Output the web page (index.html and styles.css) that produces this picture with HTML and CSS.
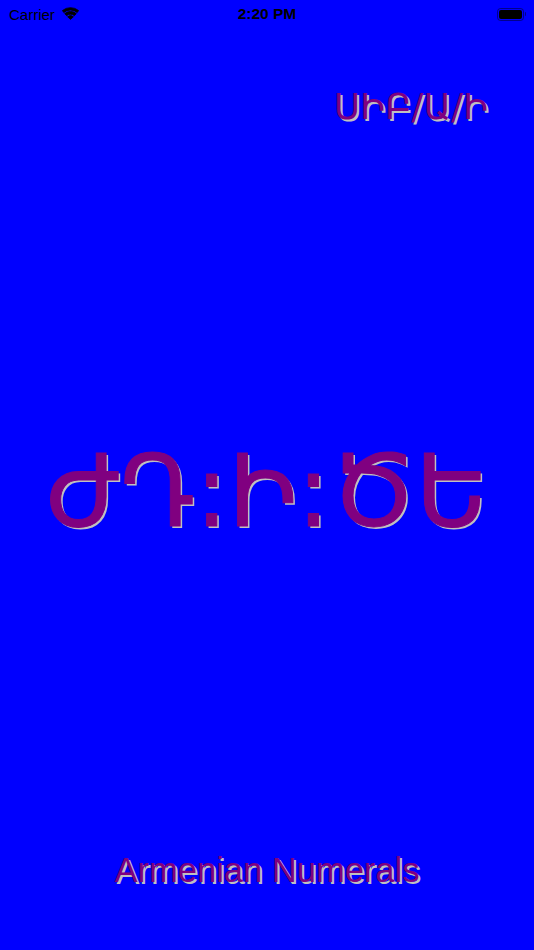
FILE: index.html
```html
<!DOCTYPE html>
<html>
<head>
<meta charset="utf-8">
<link rel="stylesheet" href="styles.css">
</head>
<body>
<div class="screen">
  <div class="status">
    <div class="status-left">
      <span class="carrier">Carrier</span>
      <svg class="wifi" width="17" height="14" viewBox="0 0 17 14">
        <g fill="#000" stroke="#000" stroke-width="0.8" stroke-linejoin="round">
          <path d="M8.5 13.4 L5.62 10.81 A4.3 4.3 0 0 1 11.38 10.81 Z"/>
          <path d="M2.75 7.61 A8.6 8.6 0 0 1 14.25 7.61 L12.38 9.69 A5.8 5.8 0 0 0 4.62 9.69 Z"/>
          <path d="M0.4 4.56 A12.7 12.7 0 0 1 16.6 4.56 L15.19 6.57 A10 10 0 0 0 1.81 6.57 Z"/>
        </g>
      </svg>
    </div>
    <div class="time">2:20 PM</div>
    <div class="status-right">
      <div class="battery"><div class="battery-fill"></div></div>
      <div class="battery-nub"></div>
    </div>
  </div>
  <div class="date-row"><span class="date">ՍԻԲ/Ա/Ի</span></div>
  <div class="clock-row"><span class="clock">ԺԴ:Ի:ԾԵ</span></div>
  <div class="title-row"><span class="title">Armenian Numerals</span></div>
</div>
</body>
</html>
```

FILE: styles.css
```css
html, body {
  margin: 0;
  padding: 0;
  background: #0000ff;
}
.screen {
  width: 534px;
  height: 950px;
  background: #0000ff;
  display: flex;
  flex-direction: column;
  overflow: hidden;
}
.status {
  height: 28px;
  display: flex;
  align-items: center;
  justify-content: space-between;
  padding: 0 8px 0 9px;
  position: relative;
  font-family: "Liberation Sans", Arial, sans-serif;
  color: #000;
}
.status-left {
  display: flex;
  align-items: center;
  gap: 7px;
}
.carrier {
  font-size: 15px;
}
.wifi {
  display: block;
  margin-top: -3px;
}
.time {
  position: absolute;
  left: 0;
  right: 0;
  text-align: center;
  font-size: 15.5px;
  font-weight: bold;
  pointer-events: none;
}
.status-right {
  display: flex;
  align-items: center;
  gap: 1px;
}
.battery {
  width: 27px;
  height: 13px;
  border: 1px solid rgba(0, 0, 0, 0.45);
  border-radius: 3.5px;
  padding: 1px;
  box-sizing: border-box;
  display: flex;
}
.battery-fill {
  flex: 1;
  background: #000;
  border-radius: 2px;
}
.battery-nub {
  width: 1.5px;
  height: 4px;
  background: rgba(0, 0, 0, 0.45);
  border-radius: 0 1px 1px 0;
}
.date-row {
  display: flex;
  justify-content: flex-end;
  padding-right: 46px;
  margin-top: 59px;
}
.date, .clock, .title {
  color: #800080;
  text-shadow: 2px 2px 0 #c0c0c0;
  white-space: nowrap;
}
.date, .clock {
  font-family: "DejaVu Sans", "Noto Sans", sans-serif;
}
.date {
  font-size: 36px;
  line-height: 40px;
}
.clock-row {
  display: flex;
  justify-content: center;
  margin-top: 310px;
}
.clock {
  font-size: 99px;
  line-height: 110px;
  -webkit-text-stroke: 1px #800080;
}
.title-row {
  display: flex;
  justify-content: center;
  margin-top: auto;
  margin-bottom: 60px;
}
.title {
  font-family: "Liberation Sans", Arial, sans-serif;
  font-size: 34.5px;
  line-height: 40px;
}
```
